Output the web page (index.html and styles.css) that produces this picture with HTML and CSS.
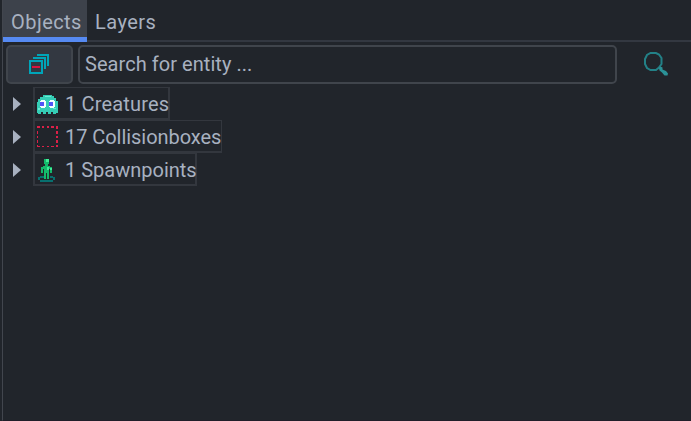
FILE: index.html
```html
<!DOCTYPE html>
<html lang="en">
<head>
<meta charset="utf-8">
<title>Objects</title>
<link rel="stylesheet" href="styles.css">
</head>
<body>
<main class="panel">
  <nav class="tabs">
    <div class="tab active">Objects</div>
    <div class="tab">Layers</div>
  </nav>
  <div class="toolbar">
    <div class="collapse">
      <svg width="20" height="20" viewBox="0 0 20 20" shape-rendering="crispEdges">
        <path fill="#00a5b9" d="M8 0h12v12h-2V2H8zM4 3h13v12h-2V5H4zM0 6h14v14H0zM2 8v10h10V8z" fill-rule="evenodd"/>
        <path fill="#dc143c" d="M3 12h8v2H3z"/>
      </svg>
    </div>
    <div class="search">Search for entity ...</div>
    <svg class="lens" width="24" height="24" viewBox="0 0 24 24">
      <path fill="none" stroke="#238187" stroke-width="2" d="M6.500 1h5.500l3 1.500 2.500 3.500v6l-2.500 3.500-3 2.500h-5.500l-3.500-2-2-4v-5l2-4z"/>
      <path fill="#2b9297" d="M15 16l1.500-1.500 2 1v2l3.500 1.500 2 2.500-.5 2h-3l-2.500-3-2.500-2z"/>
    </svg>
  </div>
  <div class="tree">
    <div class="row">
      <span class="arrow"></span>
      <div class="node creatures">
        <svg class="icon" width="22" height="20" viewBox="0 0 22 20" shape-rendering="crispEdges">
          <path fill="#35cdb5" d="M6 0h9v1h2v2h2v3h2v12h-2v1h-3v-2h-2v2h-3v-2H9v2H6v-2H4v2H1v-1H0V7h1V4h2V2h3z"/>
          <path fill="#68ecd4" d="M8 1h6v1H8zM1 13h2v2H1zM16 13h3v1h-3z"/>
          <path fill="#f4ffff" d="M4 5h4v1h1v6H8v1H4v-1H3V6h1zM13 5h4v1h1v6h-1v1h-4v-1h-1V6h1z"/>
          <path fill="#5355f5" d="M3 7h4v4H3zM12 7h4v4h-4z"/>
        </svg>
        <span>1 Creatures</span>
      </div>
    </div>
    <div class="row">
      <span class="arrow"></span>
      <div class="node boxes">
        <svg class="icon" width="22" height="22" viewBox="0 0 22 22" shape-rendering="crispEdges">
          <path fill="#dc2048" d="M0 0h3v2H0zM5 0h2v2H5zM10 0h2v2h-2zM14 0h3v2h-3zM19 0h2v3h-2zM0 5h1v3H0zM0 10h1v2H0zM0 14h1v3H0zM19 5h2v3h-2zM19 10h2v2h-2zM19 14h2v3h-2zM0 19h1v1h2v1H0zM5 20h2v1H5zM10 20h2v1h-2zM14 20h3v1h-3zM19 19h2v2h-2z"/>
        </svg>
        <span>17 Collisionboxes</span>
      </div>
    </div>
    <div class="row">
      <span class="arrow"></span>
      <div class="node spawns">
        <svg class="icon" width="22" height="24" viewBox="0 0 22 24" shape-rendering="crispEdges">
          <path fill="#08706f" d="M3 17h4v2H3zM13 17h3v2h-3zM1 18h2v3H1zM16 18h2v3h-2zM3 21h13v2H3z"/>
          <path fill="#14b86b" d="M7 0h5v5h-1v2h2v1h2v6h-2v-4h-1v10h-2v-6H9v6H7V10H6v4H4V8h2V7h2V5H7z"/>
          <path fill="#42eb98" d="M9 0h3v3H9zM10 8h2v3h-2zM13 9h2v2h-2z"/>
        </svg>
        <span>1 Spawnpoints</span>
      </div>
    </div>
  </div>
</main>
</body>
</html>
```
FILE: styles.css
```css
* { box-sizing: border-box; }

body {
  margin: 0;
  background: #21252b;
  color: #a8b1c0;
  font: 20px/24px Roboto, sans-serif;
}

.panel {
  height: 421px;
  margin-left: 2px;
  border-left: 1px solid #42464e;
  border-bottom: 1px solid #201e29;
  overflow: hidden;
}

.tabs {
  display: flex;
  height: 42px;
  box-shadow: inset 0 -2px #333841;
}

.tab {
  padding: 10px 8px 0;
  letter-spacing: 0.45px;
  white-space: nowrap;
}

.tab.active {
  width: 84px;
  background: #3d424b;
  border-bottom: 5px solid #568af2;
}

.toolbar {
  display: flex;
  height: 45px;
  padding: 3px 0 3px 3px;
}

.collapse {
  display: flex;
  width: 67px;
  height: 39px;
  padding: 7px 0 0 21px;
  border: 2px solid #40454c;
  border-radius: 5px;
  background: #333841;
}

.search {
  width: 539px;
  height: 39px;
  margin-left: 5px;
  padding: 5px 5px 0;
  border: 2px solid #40454c;
  border-radius: 5px;
  letter-spacing: 0.05px;
}

.lens { margin: 7px 0 0 27px; }

.row {
  display: flex;
  height: 33px;
}

.arrow {
  width: 8px;
  height: 14px;
  margin: 10px 12px 0 10px;
  background: #a8b1c0;
  clip-path: polygon(0 0, 100% 50%, 0 100%);
}

.node {
  display: flex;
  height: 33px;
  padding: 4px 0 0 2px;
  border: solid #33373e;
  border-width: 1px 2px 2px;
  white-space: nowrap;
}

.node span { margin-left: 6px; }
.creatures { width: 137px; letter-spacing: 0.17px; }
.boxes { width: 189px; border-right-width: 1px; letter-spacing: -0.05px; }
.spawns { width: 164px; }
.icon { flex: none; margin-top: 3px; }
.boxes .icon { margin-top: 1px; }
.spawns .icon { margin-top: 1px; }
```
